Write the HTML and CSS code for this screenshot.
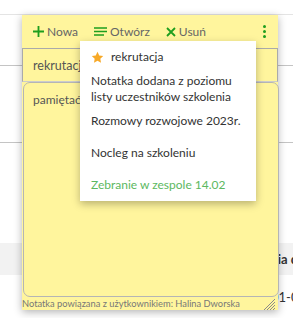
FILE: index.html
```html
<!DOCTYPE html>
<html lang="pl">
<head>
  <meta charset="UTF-8" />
  <title>Notatki</title>
  <link rel="stylesheet" href="styles.css">
</head>
<body>
<div class="page">
  <div class="top"></div>
  <div class="row row-a"></div>
  <div class="row row-b"></div>
  <div class="spacer"></div>
  <div class="band">
    <svg class="sort-icon" width="12" height="8" viewBox="0 0 12 8">
      <rect x="0" y="0" width="12" height="1.3" fill="#8a8a8a"/>
      <rect x="0" y="3" width="9" height="1.3" fill="#8a8a8a"/>
      <rect x="0" y="6" width="6" height="1.3" fill="#8a8a8a"/>
    </svg>
    <span class="band-title">Data utworzenia dokumentu</span>
  </div>
  <div class="row row-c">
    <span class="date">2023-01-06</span>
  </div>
</div>

<!-- Sticky note -->
<div class="note">
  <div class="toolbar">
    <button class="tool">
      <svg width="11" height="11" viewBox="0 0 12 12"><path d="M6 0v12M0 6h12" stroke="#1e9e1e" stroke-width="2"/></svg>
      Nowa
    </button>
    <button class="tool">
      <svg width="13" height="9" viewBox="0 0 13 9"><path d="M0 1h13M0 4.5h13M0 8h10" stroke="#1e9e1e" stroke-width="1.6"/></svg>
      Otwórz
    </button>
    <button class="tool">
      <svg width="10" height="10" viewBox="0 0 10 10"><path d="M1 1l8 8M9 1l-8 8" stroke="#1e9e1e" stroke-width="1.8"/></svg>
      Usuń
    </button>
    <button class="kebab" aria-label="Więcej">
      <span></span><span></span><span></span>
    </button>
  </div>

  <div class="title-input">rekrutacja</div>
  <div class="content">pamiętać o terminach</div>

  <div class="note-footer">
    <span>Notatka powiązana z użytkownikiem: Halina Dworska</span>
    <svg class="grip" width="14" height="14" viewBox="0 0 14 14">
      <path d="M13 2L2 13M13 5L5 13M13 8L8 13M13 11L11 13" stroke="#8a8a8a" stroke-width="1"/>
    </svg>
  </div>

  <ul class="menu">
    <li class="menu-item">
      <svg class="star" width="13" height="13" viewBox="0 0 24 24"><path d="M12 1.5l3.2 6.7 7.3 1-5.3 5.1 1.3 7.3L12 18.1l-6.5 3.5 1.3-7.3L1.5 9.2l7.3-1z" fill="#f7a928"/></svg>
      rekrutacja
    </li>
    <li class="menu-item">Notatka dodana z poziomu listy uczestników szkolenia</li>
    <li class="menu-item">Rozmowy rozwojowe 2023r.</li>
    <li class="menu-item">Nocleg na szkoleniu</li>
    <li class="menu-item active">Zebranie w zespole 14.02</li>
  </ul>
</div>
</body>
</html>
```

FILE: styles.css
```css
:root {
  --note: #fff59d;
  --green: #1e9e1e;
  --text-main: #333;
  --text-muted: #666;
}

body {
  margin: 0;
  font-family: Lato, "Noto Sans", sans-serif;
  background: #fff;
  color: var(--text-main);
  overflow: hidden;
}

.page {
  width: 293px;
  overflow: hidden;
}

.top {
  height: 14px;
  border-bottom: 1px solid #e4e4e4;
}

.row {
  border-bottom: 1px solid #c4c4c4;
}

.row-a {
  height: 50px;
}

.row-b {
  height: 76px;
}

.spacer {
  height: 100px;
}

.band {
  height: 32px;
  background: #f2f2f2;
  display: flex;
  align-items: center;
  padding-left: 2px;
}

.band-title {
  margin-left: 190px;
  font-size: 13px;
  font-weight: 700;
  white-space: nowrap;
}

.row-c {
  border-bottom: none;
  height: 44px;
  display: flex;
  align-items: center;
}

.date {
  margin-left: 236px;
  font-size: 13px;
  white-space: nowrap;
}

/* note */
.note {
  position: absolute;
  left: 22px;
  top: 15px;
  width: 256px;
  height: 295px;
  background: var(--note);
  box-shadow: 0 2px 8px rgba(0, 0, 0, 0.3);
  display: flex;
  flex-direction: column;
}

.toolbar {
  height: 33px;
  display: flex;
  align-items: center;
  padding: 0 12px 0 11px;
  gap: 16px;
}

.tool {
  display: flex;
  align-items: center;
  gap: 3px;
  background: none;
  border: none;
  padding: 0;
  font: inherit;
  font-size: 12px;
  color: var(--text-muted);
  cursor: pointer;
}

.kebab {
  margin-left: auto;
  display: flex;
  flex-direction: column;
  gap: 2px;
  background: none;
  border: none;
  padding: 0;
}

.kebab span {
  width: 3px;
  height: 3px;
  border-radius: 50%;
  background: var(--green);
}

.title-input {
  height: 34px;
  border: 1px solid #aaa;
  border-bottom-color: #ccc;
  box-sizing: border-box;
  display: flex;
  align-items: center;
  padding-left: 10px;
  font-size: 12.5px;
  color: #555;
}

.content {
  flex: 1;
  margin: 0 -1px 0 1px;
  border: 1px solid #b5b5b5;
  border-radius: 7px;
  padding: 9px 9px;
  font-size: 12px;
  color: #555;
}

.note-footer {
  height: 13px;
  display: flex;
  align-items: center;
  font-size: 9.3px;
  color: #777;
  white-space: nowrap;
}

.grip {
  margin-left: auto;
  margin-right: 2px;
}

/* dropdown */
.menu {
  position: absolute;
  left: 58px;
  top: 26px;
  width: 176px;
  margin: 0;
  padding: 0;
  list-style: none;
  background: #fff;
  box-shadow: 0 3px 8px rgba(0, 0, 0, 0.28);
}

.menu-item {
  min-height: 32px;
  display: flex;
  align-items: center;
  padding: 0 11px;
  line-height: 16px;
  font-size: 12px;
  color: var(--text-main);
}

.menu-item .star {
  margin-right: 7px;
}

.menu-item.active {
  color: #5cb860;
}
```
